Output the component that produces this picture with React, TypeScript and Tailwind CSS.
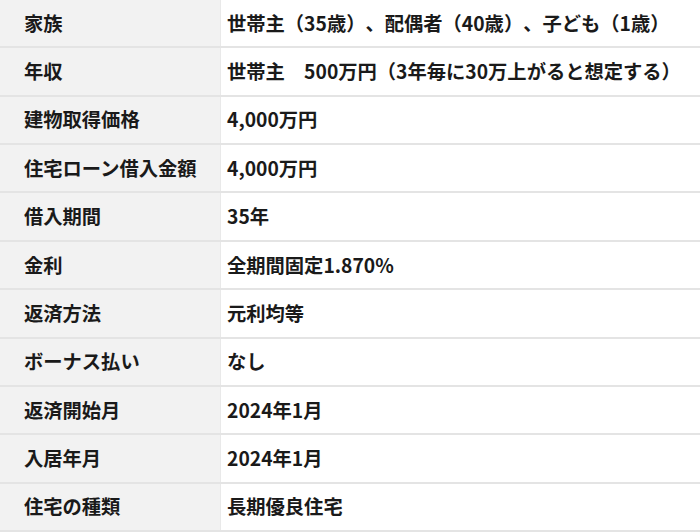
import React from "react";

const rows: [string, string][] = [
  ["家族", "世帯主（35歳）、配偶者（40歳）、子ども（1歳）"],
  ["年収", "世帯主　500万円（3年毎に30万上がると想定する）"],
  ["建物取得価格", "4,000万円"],
  ["住宅ローン借入金額", "4,000万円"],
  ["借入期間", "35年"],
  ["金利", "全期間固定1.870%"],
  ["返済方法", "元利均等"],
  ["ボーナス払い", "なし"],
  ["返済開始月", "2024年1月"],
  ["入居年月", "2024年1月"],
  ["住宅の種類", "長期優良住宅"],
];

export default function App() {
  return (
    <div
      className="w-[700px] h-[532px] bg-white flex flex-col text-[19.3px] font-bold text-[#1a1a1a] overflow-hidden [text-spacing-trim:space-all]"
      style={{ fontFamily: '"Noto Sans CJK JP", "Noto Sans", sans-serif' }}
    >
      {rows.map(([k, v], i) => (
        <div
          key={i}
          className="flex h-[48.36px] shrink-0 border-b-2 border-[#e4e4e4]"
        >
          <div className="w-[221px] shrink-0 bg-[#f2f2f2] border-r border-[#e9e9e9] flex items-center pl-[24px]">
            {k}
          </div>
          <div className="flex-1 flex items-center pl-[6px] whitespace-nowrap">{v}</div>
        </div>
      ))}
    </div>
  );
}
